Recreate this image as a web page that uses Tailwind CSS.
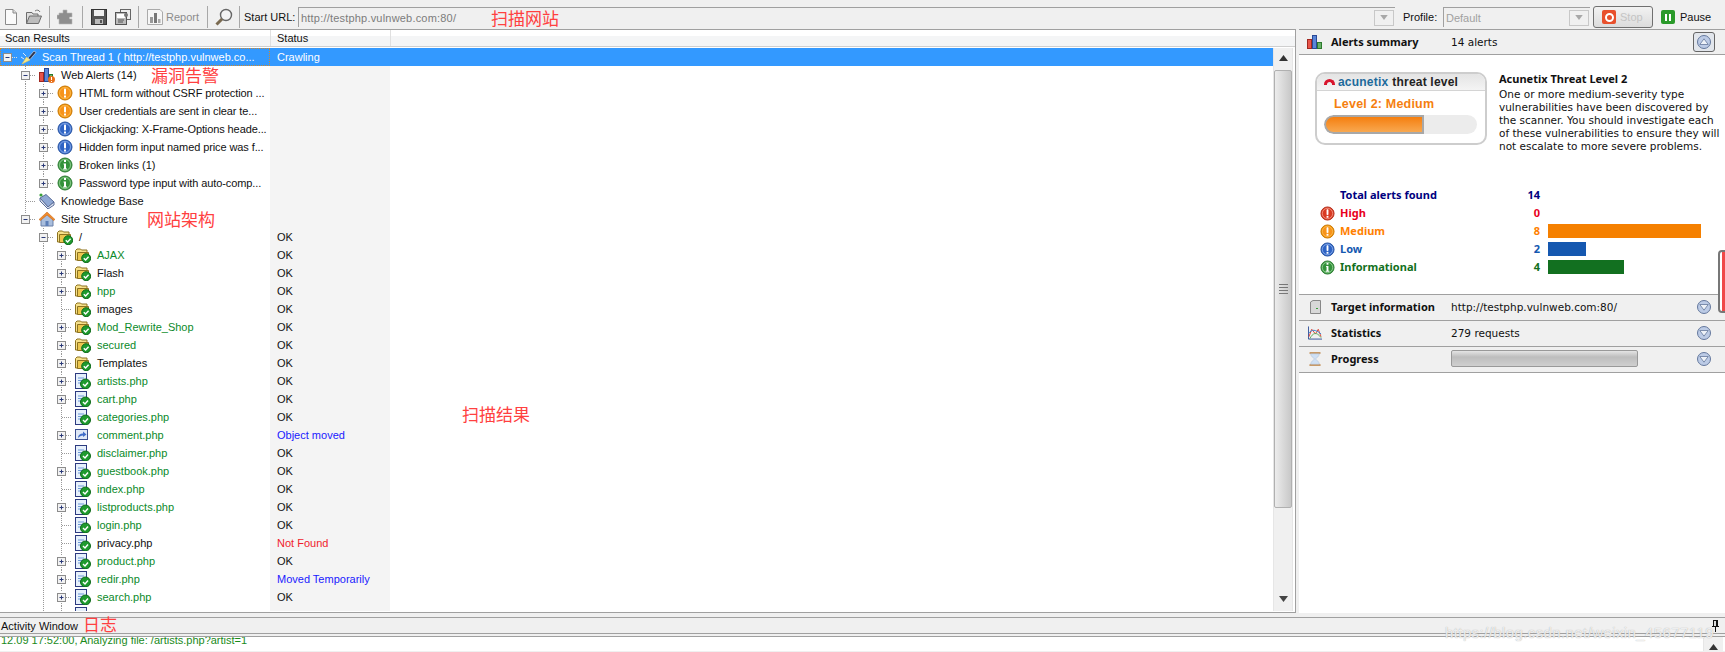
<!DOCTYPE html>
<html lang="en">
<head>
  <meta charset="UTF-8" />
  <title>Acunetix Web Vulnerability Scanner</title>
  <script src="https://cdn.jsdelivr.net/npm/@tailwindcss/browser@4"></script>
</head>
<body class="relative h-[652px] w-[1725px] overflow-hidden bg-[#f0f0f0] font-['Liberation_Sans',sans-serif] text-[11px] leading-[18px] text-[#111]">

  <!-- icon sprite -->
  <svg class="absolute size-0" aria-hidden="true">
    <!-- tree connectors -->
    <symbol id="g" viewBox="0 0 18 18"><path d="M7.5 0V18" stroke="#999" stroke-dasharray="1 1" fill="none"/></symbol>
    <symbol id="l" viewBox="0 0 18 18"><path d="M7.5 0V18M8 9.5H18" stroke="#999" stroke-dasharray="1 1" fill="none"/></symbol>
    <symbol id="p" viewBox="0 0 18 18"><path d="M7.5 0V4M7.5 13V18M12 9.5H18" stroke="#999" stroke-dasharray="1 1" fill="none"/><rect x="3.5" y="5.5" width="8" height="8" fill="#f2f2f2" stroke="#8c8c8c"/><path d="M5.5 9.5H9.5M7.5 7.5V11.5" stroke="#2b3a78"/></symbol>
    <symbol id="pe" viewBox="0 0 18 18"><path d="M7.5 0V4M12 9.5H18" stroke="#999" stroke-dasharray="1 1" fill="none"/><rect x="3.5" y="5.5" width="8" height="8" fill="#f2f2f2" stroke="#8c8c8c"/><path d="M5.5 9.5H9.5M7.5 7.5V11.5" stroke="#2b3a78"/></symbol>
    <symbol id="m" viewBox="0 0 18 18"><path d="M7.5 0V4M7.5 13V18M12 9.5H18" stroke="#999" stroke-dasharray="1 1" fill="none"/><rect x="3.5" y="5.5" width="8" height="8" fill="#f2f2f2" stroke="#8c8c8c"/><path d="M5.5 9.5H9.5" stroke="#2b3a78"/></symbol>
    <symbol id="me" viewBox="0 0 18 18"><path d="M7.5 0V4M12 9.5H18" stroke="#999" stroke-dasharray="1 1" fill="none"/><rect x="3.5" y="5.5" width="8" height="8" fill="#f2f2f2" stroke="#8c8c8c"/><path d="M5.5 9.5H9.5" stroke="#2b3a78"/></symbol>
    <symbol id="m0" viewBox="0 0 18 18"><path d="M12 9.5H18" stroke="#ddd" stroke-dasharray="1 1" fill="none"/><rect x="3.5" y="5.5" width="8" height="8" fill="#f2f2f2" stroke="#8c8c8c"/><path d="M5.5 9.5H9.5" stroke="#2b3a78"/></symbol>
    <!-- alert circles -->
    <symbol id="warn" viewBox="0 0 16 16"><circle cx="8" cy="8" r="7" fill="#f59a0c" stroke="#c87400"/><circle cx="8" cy="8" r="5.5" fill="#f7931a" stroke="#fcc060" stroke-width=".7"/><rect x="7" y="3.5" width="2" height="6" rx=".8" fill="#fff"/><rect x="7" y="10.5" width="2" height="2" fill="#fff"/></symbol>
    <symbol id="low" viewBox="0 0 16 16"><circle cx="8" cy="8" r="7" fill="#3f72cf" stroke="#23509f"/><circle cx="8" cy="8" r="5.5" fill="#2e63c4" stroke="#9dbcf0" stroke-width=".7"/><rect x="7" y="3.5" width="2" height="6" rx=".8" fill="#fff"/><rect x="7" y="10.5" width="2" height="2" fill="#fff"/></symbol>
    <symbol id="info" viewBox="0 0 16 16"><circle cx="8" cy="8" r="7" fill="#4aa24e" stroke="#2a7a30"/><circle cx="8" cy="8" r="5.5" fill="#33923a" stroke="#a8dca8" stroke-width=".7"/><rect x="7" y="3" width="2" height="2" fill="#fff"/><path d="M6.5 6.5H9V11.5H10V12.5H6V11.5H7V7.5H6.5Z" fill="#fff"/></symbol>
    <symbol id="high" viewBox="0 0 16 16"><circle cx="8" cy="8" r="7" fill="#e04a30" stroke="#b02a18"/><circle cx="8" cy="8" r="5.5" fill="#d93a22" stroke="#f8a898" stroke-width=".7"/><rect x="7" y="3.5" width="2" height="6" rx=".8" fill="#fff"/><rect x="7" y="10.5" width="2" height="2" fill="#fff"/></symbol>
    <!-- tree node icons -->
    <symbol id="folder" viewBox="0 0 16 16"><path d="M.5 13V3.5L2 2H5.5L6.5 3H12V13Z" fill="#f6e08a" stroke="#8c7220"/><path d="M2.5 5.5H13.5V13.5H2.5Z" fill="#ecc64e" stroke="#8c7220"/><circle cx="11.2" cy="11.2" r="4.5" fill="#1f9a2e" stroke="#0e6a1a"/><path d="M8.8 11.2L10.6 13L13.6 9.8" stroke="#fff" stroke-width="1.4" fill="none"/></symbol>
    <symbol id="page" viewBox="0 0 16 16"><rect x=".5" y=".5" width="11" height="15" fill="#e6f0fb" stroke="#2c3a80"/><path d="M3 5H9M3 7.5H8M3 10H6" stroke="#6c9ad8"/><circle cx="10.5" cy="11" r="5" fill="#1f9a2e" stroke="#0e6a1a"/><path d="M8 11L10 13L13 9.5" stroke="#fff" stroke-width="1.4" fill="none"/></symbol>
    <symbol id="redirect" viewBox="0 0 16 16"><rect x=".5" y="2.5" width="12" height="10" fill="#dfe8f6" stroke="#3b4f90"/><path d="M3 11C3 8 5 6.5 8 6.5V4.5L11.5 7.5L8 10V8.5C6 8.5 4.5 9.5 3 11Z" fill="#3f6cc8"/></symbol>
    <symbol id="scan" viewBox="0 0 16 16"><path d="M1 15L5.5 8L9 11Z" fill="#f8e88a" stroke="#e8c850" stroke-width=".6"/><path d="M7 9L13 2L15 3.5L9 10.5Z" fill="#2c3550" stroke="#fff" stroke-width=".5"/><path d="M0 8L3 10M2 4L5 7" stroke="#dce8f8"/></symbol>
    <symbol id="alerts" viewBox="0 0 16 16"><rect x=".5" y="5.5" width="4" height="9" fill="#e8544a" stroke="#a02820"/><rect x="5.5" y="1.5" width="4" height="13" fill="#5a86d8" stroke="#2a4a98"/><rect x="10.5" y="7.5" width="3" height="7" fill="#6ab06a" stroke="#2c7a2c"/><circle cx="12.5" cy="12.5" r="3.5" fill="#e8701a"/><rect x="12" y="10" width="1" height="3" fill="#fff"/><rect x="12" y="14" width="1" height="1" fill="#fff"/></symbol>
    <symbol id="book" viewBox="0 0 16 16"><path d="M1 5L7 1.5L15 9L9 14Z" fill="#8fa8d4" stroke="#5a6c98"/><path d="M1 5V8L9 16L15 12V9L9 14Z" fill="#dfe6f2" stroke="#5a6c98"/><circle cx="2" cy="2" r="1.6" fill="#3aa03a"/></symbol>
    <symbol id="house" viewBox="0 0 16 16"><path d="M2 8V15H14V8L8 3Z" fill="#a9bedd" stroke="#6a80a8"/><path d="M0 8.5L8 1L16 8.5L14.5 9.5L8 4L1.5 9.5Z" fill="#ef8a2c" stroke="#c05f10" stroke-width=".5"/><rect x="6.5" y="10" width="3" height="5" fill="#5d7fb8"/></symbol>
    <!-- toolbar -->
    <symbol id="t-new" viewBox="0 0 16 16"><path d="M2.5 .5H10L13.5 4V15.5H2.5Z" fill="#fafafa" stroke="#8a8a8a"/><path d="M10 .5V4H13.5" fill="#ddd" stroke="#8a8a8a"/></symbol>
    <symbol id="t-open" viewBox="0 0 16 16"><path d="M.5 14.5V3.5H6L7 5H12V7" fill="#ddd" stroke="#6c6c6c"/><path d="M.5 14.5L3.5 7H15.5L12.5 14.5Z" fill="#bdbdbd" stroke="#6c6c6c"/><path d="M9 2C11 .5 13 1 14 3" stroke="#777" fill="none"/></symbol>
    <symbol id="t-plug" viewBox="0 0 16 16"><path d="M6 1H10V4H15V8H12.5V10H15V15H2V10H0V6H2V4H6Z" fill="#8e8e8e" stroke="#b8b8b8" stroke-width=".6"/></symbol>
    <symbol id="t-save" viewBox="0 0 16 16"><rect x=".5" y=".5" width="15" height="15" fill="#555" stroke="#333"/><rect x="3" y="1" width="10" height="6" fill="#efefef"/><rect x="4" y="10" width="8" height="5" fill="#bbb"/><rect x="9" y="11" width="2" height="3" fill="#555"/></symbol>
    <symbol id="t-saveall" viewBox="0 0 16 16"><rect x="5.5" y=".5" width="10" height="10" fill="#eee" stroke="#666"/><rect x=".5" y="3.5" width="11" height="12" fill="#bbb" stroke="#555"/><rect x="2" y="5" width="8" height="4" fill="#fff"/><path d="M3 11H9M3 13H8" stroke="#555"/><circle cx="11" cy="6" r="2" fill="#777"/></symbol>
    <symbol id="t-report" viewBox="0 0 16 16"><path d="M.5 .5H13L15.5 3V15.5H.5Z" fill="#f6f6f6" stroke="#aaa"/><rect x="3" y="8" width="3" height="6" fill="#999"/><rect x="7" y="4" width="3" height="10" fill="#777"/><rect x="11" y="10" width="2.5" height="4" fill="#aaa"/></symbol>
    <symbol id="t-find" viewBox="0 0 18 18"><circle cx="11" cy="7" r="5.5" fill="#f3f3f3" stroke="#666" stroke-width="1.4"/><path d="M7 11L1.5 16.5" stroke="#7a6a50" stroke-width="3"/></symbol>
    <!-- right panel -->
    <symbol id="r-bars" viewBox="0 0 16 14"><rect x=".5" y="4.5" width="4" height="9" fill="#e8544a" stroke="#a02820"/><rect x="5.5" y=".5" width="4" height="13" fill="#5a86d8" stroke="#2a4a98"/><rect x="10.5" y="7.5" width="4" height="6" fill="#6ab06a" stroke="#2c7a2c"/></symbol>
    <symbol id="r-server" viewBox="0 0 14 14"><path d="M2.5 2L5 .5H12.5V13.5H2.5Z" fill="#d8d8d8" stroke="#888"/><rect x="8" y="8" width="2" height="1" fill="#3aa03a"/></symbol>
    <symbol id="r-stats" viewBox="0 0 15 14"><path d="M.5 0V13.5H15" stroke="#2a4a98" fill="none"/><path d="M1 11L4 3L8 8L11 3L14 11" stroke="#e04030" fill="none"/><path d="M1 7C4 3 8 3 14 8" stroke="#3a80d0" fill="none"/><path d="M2 13C5 7 9 5 14 12" stroke="#58a858" fill="none"/></symbol>
    <symbol id="r-glass" viewBox="0 0 15 16"><rect x="1" y="0" width="13" height="2.2" rx="1" fill="#c89a68"/><rect x="1" y="13.8" width="13" height="2.2" rx="1" fill="#c89a68"/><path d="M2.5 2H12.5C12.5 5 9 7 8 8C9 9 12.5 11 12.5 14H2.5C2.5 11 6 9 7 8C6 7 2.5 5 2.5 2Z" fill="#cfe0f4" stroke="#a8b8cc" stroke-width=".5"/></symbol>
    <symbol id="r-down" viewBox="0 0 14 14"><circle cx="7" cy="7" r="6.5" fill="#bccbe6" stroke="#64789c"/><path d="M2.8 4.5H11.2L7 10.2Z" fill="#eef2f8" stroke="#64789c" stroke-width=".8" stroke-linejoin="round"/></symbol>
    <symbol id="r-up" viewBox="0 0 14 14"><circle cx="7" cy="7" r="6.5" fill="#bccbe6" stroke="#64789c"/><path d="M2.8 9.5H11.2L7 3.8Z" fill="#eef2f8" stroke="#64789c" stroke-width=".8" stroke-linejoin="round"/></symbol>
    <symbol id="arrow-up" viewBox="0 0 9 6"><path d="M4.5 0L9 6H0Z" fill="#333"/></symbol>
    <symbol id="arrow-down" viewBox="0 0 9 6"><path d="M4.5 6L9 0H0Z" fill="#444"/></symbol>
    <symbol id="arrow-light" viewBox="0 0 9 6"><path d="M4.5 6L9 0H0Z" fill="#a8a8a8"/></symbol>
  </svg>

  <!-- toolbar -->
  <div class="flex h-[29px] items-center pl-[3px] pt-[5px]">
    <svg class="size-4 shrink-0"><use href="#t-new"/></svg>
    <svg class="ml-[7px] size-4 shrink-0"><use href="#t-open"/></svg>
    <i class="ml-[7px] h-[22px] w-px bg-[#a8a8a8]"></i>
    <svg class="ml-[7px] size-4 shrink-0"><use href="#t-plug"/></svg>
    <i class="ml-[9px] h-[22px] w-px bg-[#a8a8a8]"></i>
    <svg class="ml-[8px] size-4 shrink-0"><use href="#t-save"/></svg>
    <svg class="ml-[8px] size-4 shrink-0"><use href="#t-saveall"/></svg>
    <i class="ml-[7px] h-[22px] w-px bg-[#a8a8a8]"></i>
    <svg class="ml-[8px] size-4 shrink-0"><use href="#t-report"/></svg>
    <span class="ml-[3px] w-[34px] text-[#8c8c8c]">Report</span>
    <i class="ml-[7px] h-[22px] w-px bg-[#a8a8a8]"></i>
    <svg class="ml-[7px] size-[18px] shrink-0"><use href="#t-find"/></svg>
    <i class="ml-[6px] h-[22px] w-px bg-[#a8a8a8]"></i>
    <span class="ml-[4px] w-[50px] whitespace-nowrap">Start URL:</span>
    <div class="ml-[4px] flex h-[20px] w-[1097px] items-center border-t border-l border-t-[#a0a0a0] border-l-[#a0a0a0] pl-[2px] text-[#7c7c7c]">
      <span class="w-[190px] tracking-[0.2px]">http://testphp.vulnweb.com:80/</span>
      <span class="font-['Noto_Sans_CJK_SC',sans-serif] text-[17px] leading-[20px] text-[#ff4040]">扫描网站</span>
      <div class="ml-auto mr-[1px] flex h-[16px] w-[20px] items-center justify-center border border-[#c8c8c8] bg-[#f0f0f0]"><svg class="h-[5px] w-[8px]"><use href="#arrow-light"/></svg></div>
    </div>
    <span class="ml-[8px] w-[34px]">Profile:</span>
    <div class="ml-[6px] flex h-[20px] w-[147px] items-center border-t border-l border-t-[#a0a0a0] border-l-[#a0a0a0] pl-[2px] text-[#a0a0a0]">
      <span>Default</span>
      <div class="ml-auto mr-[1px] flex h-[16px] w-[20px] items-center justify-center border border-[#c8c8c8] bg-[#f0f0f0]"><svg class="h-[5px] w-[8px]"><use href="#arrow-light"/></svg></div>
    </div>
    <div class="ml-[3px] flex h-[22px] w-[60px] items-center rounded-[3px] border border-[#707070] bg-gradient-to-b from-[#f2f2f2] to-[#dcdcdc] pl-[8px] text-[#c4c4c4]">
      <span class="flex size-[14px] items-center justify-center rounded-[2px] bg-[#e8502c]"><span class="size-[9px] rounded-full border-2 border-white"></span></span>
      <span class="ml-[4px]">Stop</span>
    </div>
    <span class="ml-[8px] flex size-[14px] items-center justify-center gap-[2px] rounded-[2px] bg-[#2a9a2a]"><i class="h-[7px] w-[2px] bg-white"></i><i class="h-[7px] w-[2px] bg-white"></i></span>
    <span class="ml-[5px]">Pause</span>
  </div>

  <!-- main split -->
  <div class="flex h-[584px]">
    <!-- scan results pane -->
    <div class="relative flex h-full w-[1296px] flex-col border-y border-r border-[#a0a0a0] bg-white">
      <div class="mb-px flex h-[17px] border-b border-[#cfcfcf] bg-[linear-gradient(#fff_0,#fff_40%,#f4f5f6_40%)] leading-[16px]">
        <div class="w-[270px] pl-[5px]">Scan Results</div>
        <div class="w-[120px] border-l border-[#e0e0e0] pl-[6px]">Status</div>
        <div class="flex-1 border-l border-[#e0e0e0]"></div>
      </div>
      <div class="flex h-[563px] overflow-hidden">
        <div class="w-[1273px] shrink-0">
          <!-- root row -->
          <div class="flex h-[18px] bg-[#3399ff] text-white">
            <div class="flex w-[270px] shrink-0 items-center overflow-hidden border border-dotted border-[#d08a30] whitespace-nowrap"><svg class="size-[18px] shrink-0 -ml-px"><use href="#m0"/></svg><svg class="ml-[3px] mr-[5px] size-4 shrink-0"><use href="#scan"/></svg>Scan Thread 1 ( http://testphp.vulnweb.co...</div>
            <div class="w-[120px] pl-[7px]">Crawling</div>
          </div>
          <!-- alerts -->
          <div class="flex h-[18px]"><div class="flex w-[270px] shrink-0 items-center"><i class="w-[18px] shrink-0"></i><svg class="size-[18px] shrink-0"><use href="#m"/></svg><svg class="ml-[3px] mr-[6px] size-4 shrink-0"><use href="#alerts"/></svg><span class="w-[90px]">Web Alerts (14)</span><span class="font-['Noto_Sans_CJK_SC',sans-serif] text-[17px] leading-[18px] text-[#ff4040]">漏洞告警</span></div><div class="w-[120px] bg-[#f4f4f4] pl-[7px]"></div></div>
          <div class="flex h-[18px]"><div class="flex w-[270px] shrink-0 items-center tracking-[-0.1px] whitespace-nowrap"><i class="w-[18px] shrink-0"></i><svg class="size-[18px] shrink-0"><use href="#g"/></svg><svg class="size-[18px] shrink-0"><use href="#p"/></svg><svg class="ml-[3px] mr-[6px] size-4 shrink-0"><use href="#warn"/></svg>HTML form without CSRF protection ...</div><div class="w-[120px] bg-[#f4f4f4] pl-[7px]"></div></div>
          <div class="flex h-[18px]"><div class="flex w-[270px] shrink-0 items-center tracking-[-0.1px] whitespace-nowrap"><i class="w-[18px] shrink-0"></i><svg class="size-[18px] shrink-0"><use href="#g"/></svg><svg class="size-[18px] shrink-0"><use href="#p"/></svg><svg class="ml-[3px] mr-[6px] size-4 shrink-0"><use href="#warn"/></svg>User credentials are sent in clear te...</div><div class="w-[120px] bg-[#f4f4f4] pl-[7px]"></div></div>
          <div class="flex h-[18px]"><div class="flex w-[270px] shrink-0 items-center tracking-[-0.1px] whitespace-nowrap"><i class="w-[18px] shrink-0"></i><svg class="size-[18px] shrink-0"><use href="#g"/></svg><svg class="size-[18px] shrink-0"><use href="#p"/></svg><svg class="ml-[3px] mr-[6px] size-4 shrink-0"><use href="#low"/></svg>Clickjacking: X-Frame-Options heade...</div><div class="w-[120px] bg-[#f4f4f4] pl-[7px]"></div></div>
          <div class="flex h-[18px]"><div class="flex w-[270px] shrink-0 items-center tracking-[-0.1px] whitespace-nowrap"><i class="w-[18px] shrink-0"></i><svg class="size-[18px] shrink-0"><use href="#g"/></svg><svg class="size-[18px] shrink-0"><use href="#p"/></svg><svg class="ml-[3px] mr-[6px] size-4 shrink-0"><use href="#low"/></svg>Hidden form input named price was f...</div><div class="w-[120px] bg-[#f4f4f4] pl-[7px]"></div></div>
          <div class="flex h-[18px]"><div class="flex w-[270px] shrink-0 items-center whitespace-nowrap"><i class="w-[18px] shrink-0"></i><svg class="size-[18px] shrink-0"><use href="#g"/></svg><svg class="size-[18px] shrink-0"><use href="#p"/></svg><svg class="ml-[3px] mr-[6px] size-4 shrink-0"><use href="#info"/></svg>Broken links (1)</div><div class="w-[120px] bg-[#f4f4f4] pl-[7px]"></div></div>
          <div class="flex h-[18px]"><div class="flex w-[270px] shrink-0 items-center tracking-[-0.1px] whitespace-nowrap"><i class="w-[18px] shrink-0"></i><svg class="size-[18px] shrink-0"><use href="#g"/></svg><svg class="size-[18px] shrink-0"><use href="#pe"/></svg><svg class="ml-[3px] mr-[6px] size-4 shrink-0"><use href="#info"/></svg>Password type input with auto-comp...</div><div class="w-[120px] bg-[#f4f4f4] pl-[7px]"></div></div>
          <div class="flex h-[18px]"><div class="flex w-[270px] shrink-0 items-center"><i class="w-[18px] shrink-0"></i><svg class="size-[18px] shrink-0"><use href="#l"/></svg><svg class="ml-[3px] mr-[6px] size-4 shrink-0"><use href="#book"/></svg>Knowledge Base</div><div class="w-[120px] bg-[#f4f4f4] pl-[7px]"></div></div>
          <div class="flex h-[18px]"><div class="flex w-[270px] shrink-0 items-center"><i class="w-[18px] shrink-0"></i><svg class="size-[18px] shrink-0"><use href="#me"/></svg><svg class="ml-[3px] mr-[6px] size-4 shrink-0"><use href="#house"/></svg><span class="w-[86px]">Site Structure</span><span class="font-['Noto_Sans_CJK_SC',sans-serif] text-[17px] leading-[18px] text-[#ff4040]">网站架构</span></div><div class="w-[120px] bg-[#f4f4f4] pl-[7px]"></div></div>
          <!-- site tree -->
          <div class="flex h-[18px]"><div class="flex w-[270px] shrink-0 items-center"><i class="w-[36px] shrink-0"></i><svg class="size-[18px] shrink-0"><use href="#m"/></svg><svg class="ml-[3px] mr-[6px] size-4 shrink-0"><use href="#folder"/></svg>/</div><div class="w-[120px] bg-[#f4f4f4] pl-[7px]">OK</div></div>
          <div class="flex h-[18px]"><div class="flex w-[270px] shrink-0 items-center text-[#0b8a2a]"><i class="w-[36px] shrink-0"></i><svg class="size-[18px] shrink-0"><use href="#g"/></svg><svg class="size-[18px] shrink-0"><use href="#p"/></svg><svg class="ml-[3px] mr-[6px] size-4 shrink-0"><use href="#folder"/></svg>AJAX</div><div class="w-[120px] bg-[#f4f4f4] pl-[7px]">OK</div></div>
          <div class="flex h-[18px]"><div class="flex w-[270px] shrink-0 items-center"><i class="w-[36px] shrink-0"></i><svg class="size-[18px] shrink-0"><use href="#g"/></svg><svg class="size-[18px] shrink-0"><use href="#p"/></svg><svg class="ml-[3px] mr-[6px] size-4 shrink-0"><use href="#folder"/></svg>Flash</div><div class="w-[120px] bg-[#f4f4f4] pl-[7px]">OK</div></div>
          <div class="flex h-[18px]"><div class="flex w-[270px] shrink-0 items-center text-[#0b8a2a]"><i class="w-[36px] shrink-0"></i><svg class="size-[18px] shrink-0"><use href="#g"/></svg><svg class="size-[18px] shrink-0"><use href="#p"/></svg><svg class="ml-[3px] mr-[6px] size-4 shrink-0"><use href="#folder"/></svg>hpp</div><div class="w-[120px] bg-[#f4f4f4] pl-[7px]">OK</div></div>
          <div class="flex h-[18px]"><div class="flex w-[270px] shrink-0 items-center"><i class="w-[36px] shrink-0"></i><svg class="size-[18px] shrink-0"><use href="#g"/></svg><svg class="size-[18px] shrink-0"><use href="#l"/></svg><svg class="ml-[3px] mr-[6px] size-4 shrink-0"><use href="#folder"/></svg>images</div><div class="w-[120px] bg-[#f4f4f4] pl-[7px]">OK</div></div>
          <div class="flex h-[18px]"><div class="flex w-[270px] shrink-0 items-center text-[#0b8a2a]"><i class="w-[36px] shrink-0"></i><svg class="size-[18px] shrink-0"><use href="#g"/></svg><svg class="size-[18px] shrink-0"><use href="#p"/></svg><svg class="ml-[3px] mr-[6px] size-4 shrink-0"><use href="#folder"/></svg>Mod_Rewrite_Shop</div><div class="w-[120px] bg-[#f4f4f4] pl-[7px]">OK</div></div>
          <div class="flex h-[18px]"><div class="flex w-[270px] shrink-0 items-center text-[#0b8a2a]"><i class="w-[36px] shrink-0"></i><svg class="size-[18px] shrink-0"><use href="#g"/></svg><svg class="size-[18px] shrink-0"><use href="#p"/></svg><svg class="ml-[3px] mr-[6px] size-4 shrink-0"><use href="#folder"/></svg>secured</div><div class="w-[120px] bg-[#f4f4f4] pl-[7px]">OK</div></div>
          <div class="flex h-[18px]"><div class="flex w-[270px] shrink-0 items-center"><i class="w-[36px] shrink-0"></i><svg class="size-[18px] shrink-0"><use href="#g"/></svg><svg class="size-[18px] shrink-0"><use href="#p"/></svg><svg class="ml-[3px] mr-[6px] size-4 shrink-0"><use href="#folder"/></svg>Templates</div><div class="w-[120px] bg-[#f4f4f4] pl-[7px]">OK</div></div>
          <div class="flex h-[18px]"><div class="flex w-[270px] shrink-0 items-center text-[#0b8a2a]"><i class="w-[36px] shrink-0"></i><svg class="size-[18px] shrink-0"><use href="#g"/></svg><svg class="size-[18px] shrink-0"><use href="#p"/></svg><svg class="ml-[3px] mr-[6px] size-4 shrink-0"><use href="#page"/></svg>artists.php</div><div class="w-[120px] bg-[#f4f4f4] pl-[7px]">OK</div></div>
          <div class="flex h-[18px]"><div class="flex w-[270px] shrink-0 items-center text-[#0b8a2a]"><i class="w-[36px] shrink-0"></i><svg class="size-[18px] shrink-0"><use href="#g"/></svg><svg class="size-[18px] shrink-0"><use href="#p"/></svg><svg class="ml-[3px] mr-[6px] size-4 shrink-0"><use href="#page"/></svg>cart.php</div><div class="w-[120px] bg-[#f4f4f4] pl-[7px]">OK</div></div>
          <div class="flex h-[18px]"><div class="flex w-[270px] shrink-0 items-center text-[#0b8a2a]"><i class="w-[36px] shrink-0"></i><svg class="size-[18px] shrink-0"><use href="#g"/></svg><svg class="size-[18px] shrink-0"><use href="#l"/></svg><svg class="ml-[3px] mr-[6px] size-4 shrink-0"><use href="#page"/></svg>categories.php</div><div class="w-[120px] bg-[#f4f4f4] pl-[7px]">OK</div></div>
          <div class="flex h-[18px]"><div class="flex w-[270px] shrink-0 items-center text-[#0b8a2a]"><i class="w-[36px] shrink-0"></i><svg class="size-[18px] shrink-0"><use href="#g"/></svg><svg class="size-[18px] shrink-0"><use href="#p"/></svg><svg class="ml-[3px] mr-[6px] size-4 shrink-0"><use href="#redirect"/></svg>comment.php</div><div class="w-[120px] bg-[#f4f4f4] pl-[7px] text-[#1a1aff]">Object moved</div></div>
          <div class="flex h-[18px]"><div class="flex w-[270px] shrink-0 items-center text-[#0b8a2a]"><i class="w-[36px] shrink-0"></i><svg class="size-[18px] shrink-0"><use href="#g"/></svg><svg class="size-[18px] shrink-0"><use href="#l"/></svg><svg class="ml-[3px] mr-[6px] size-4 shrink-0"><use href="#page"/></svg>disclaimer.php</div><div class="w-[120px] bg-[#f4f4f4] pl-[7px]">OK</div></div>
          <div class="flex h-[18px]"><div class="flex w-[270px] shrink-0 items-center text-[#0b8a2a]"><i class="w-[36px] shrink-0"></i><svg class="size-[18px] shrink-0"><use href="#g"/></svg><svg class="size-[18px] shrink-0"><use href="#p"/></svg><svg class="ml-[3px] mr-[6px] size-4 shrink-0"><use href="#page"/></svg>guestbook.php</div><div class="w-[120px] bg-[#f4f4f4] pl-[7px]">OK</div></div>
          <div class="flex h-[18px]"><div class="flex w-[270px] shrink-0 items-center text-[#0b8a2a]"><i class="w-[36px] shrink-0"></i><svg class="size-[18px] shrink-0"><use href="#g"/></svg><svg class="size-[18px] shrink-0"><use href="#l"/></svg><svg class="ml-[3px] mr-[6px] size-4 shrink-0"><use href="#page"/></svg>index.php</div><div class="w-[120px] bg-[#f4f4f4] pl-[7px]">OK</div></div>
          <div class="flex h-[18px]"><div class="flex w-[270px] shrink-0 items-center text-[#0b8a2a]"><i class="w-[36px] shrink-0"></i><svg class="size-[18px] shrink-0"><use href="#g"/></svg><svg class="size-[18px] shrink-0"><use href="#p"/></svg><svg class="ml-[3px] mr-[6px] size-4 shrink-0"><use href="#page"/></svg>listproducts.php</div><div class="w-[120px] bg-[#f4f4f4] pl-[7px]">OK</div></div>
          <div class="flex h-[18px]"><div class="flex w-[270px] shrink-0 items-center text-[#0b8a2a]"><i class="w-[36px] shrink-0"></i><svg class="size-[18px] shrink-0"><use href="#g"/></svg><svg class="size-[18px] shrink-0"><use href="#l"/></svg><svg class="ml-[3px] mr-[6px] size-4 shrink-0"><use href="#page"/></svg>login.php</div><div class="w-[120px] bg-[#f4f4f4] pl-[7px]">OK</div></div>
          <div class="flex h-[18px]"><div class="flex w-[270px] shrink-0 items-center"><i class="w-[36px] shrink-0"></i><svg class="size-[18px] shrink-0"><use href="#g"/></svg><svg class="size-[18px] shrink-0"><use href="#l"/></svg><svg class="ml-[3px] mr-[6px] size-4 shrink-0"><use href="#page"/></svg>privacy.php</div><div class="w-[120px] bg-[#f4f4f4] pl-[7px] text-[#f01c2c]">Not Found</div></div>
          <div class="flex h-[18px]"><div class="flex w-[270px] shrink-0 items-center text-[#0b8a2a]"><i class="w-[36px] shrink-0"></i><svg class="size-[18px] shrink-0"><use href="#g"/></svg><svg class="size-[18px] shrink-0"><use href="#p"/></svg><svg class="ml-[3px] mr-[6px] size-4 shrink-0"><use href="#page"/></svg>product.php</div><div class="w-[120px] bg-[#f4f4f4] pl-[7px]">OK</div></div>
          <div class="flex h-[18px]"><div class="flex w-[270px] shrink-0 items-center text-[#0b8a2a]"><i class="w-[36px] shrink-0"></i><svg class="size-[18px] shrink-0"><use href="#g"/></svg><svg class="size-[18px] shrink-0"><use href="#p"/></svg><svg class="ml-[3px] mr-[6px] size-4 shrink-0"><use href="#page"/></svg>redir.php</div><div class="w-[120px] bg-[#f4f4f4] pl-[7px] text-[#1a1aff]">Moved Temporarily</div></div>
          <div class="flex h-[18px]"><div class="flex w-[270px] shrink-0 items-center text-[#0b8a2a]"><i class="w-[36px] shrink-0"></i><svg class="size-[18px] shrink-0"><use href="#g"/></svg><svg class="size-[18px] shrink-0"><use href="#p"/></svg><svg class="ml-[3px] mr-[6px] size-4 shrink-0"><use href="#page"/></svg>search.php</div><div class="w-[120px] bg-[#f4f4f4] pl-[7px]">OK</div></div>
          <div class="flex h-[18px]"><div class="flex w-[270px] shrink-0 items-center text-[#0b8a2a]"><i class="w-[36px] shrink-0"></i><svg class="size-[18px] shrink-0"><use href="#g"/></svg><svg class="size-[18px] shrink-0"><use href="#l"/></svg><svg class="ml-[3px] mr-[6px] size-4 shrink-0"><use href="#page"/></svg>showimage.php</div><div class="w-[120px] bg-[#f4f4f4] pl-[7px]"></div></div>
        </div>
        <!-- scrollbar -->
        <div class="flex w-[20px] shrink-0 flex-col items-center border-x border-[#e6e6e6] bg-[#f0f0f0]">
          <svg class="mt-[7px] h-[6px] w-[9px] shrink-0"><use href="#arrow-up"/></svg>
          <div class="mt-[9px] flex h-[438px] w-full shrink-0 flex-col items-center justify-center gap-[2px] rounded-[2px] border border-[#b0b0b0] bg-gradient-to-r from-[#ececec] to-[#c8c8c8]">
            <i class="h-px w-[9px] bg-[#777]"></i><i class="h-px w-[9px] bg-[#777]"></i><i class="h-px w-[9px] bg-[#777]"></i><i class="h-px w-[9px] bg-[#777]"></i>
          </div>
          <svg class="mt-auto mb-[9px] h-[6px] w-[9px] shrink-0"><use href="#arrow-down"/></svg>
        </div>
      </div>
      <span class="absolute left-[462px] top-[372px] font-['Noto_Sans_CJK_SC',sans-serif] text-[17px] leading-[24px] text-[#ff4040]">扫描结果</span>
    </div>

    <!-- summary pane -->
    <div class="ml-[3px] flex h-full flex-1 flex-col border-t border-[#a0a0a0] bg-white font-['DejaVu_Sans',sans-serif] text-[10.5px]">
      <div class="flex h-[25px] shrink-0 items-center border-b border-[#a0a0a0] bg-[#f0f0f0] pl-[8px]">
        <svg class="h-[14px] w-4 shrink-0"><use href="#r-bars"/></svg>
        <span class="ml-[8px] w-[120px] font-['Noto_Sans',sans-serif] text-[11px] font-bold">Alerts summary</span>
        <span>14 alerts</span>
        <div class="ml-auto mr-[10px] flex h-[20px] w-[22px] items-center justify-center rounded-[3px] border border-[#666] bg-[#e2e6ec]"><svg class="size-[14px]"><use href="#r-up"/></svg></div>
      </div>

      <div class="flex pl-[16px] pt-[17px]">
        <!-- threat level widget -->
        <div class="h-[73px] w-[172px] shrink-0 overflow-hidden rounded-[10px] border-2 border-[#cdcdcd] bg-white">
          <div class="flex h-[17px] items-center border-b border-[#d4d4d4] bg-gradient-to-b from-[#e4e4e4] to-[#f4f4f4] pl-[7px] font-['Liberation_Sans',sans-serif] text-[12px] font-bold tracking-[0.2px]">
            <span class="h-[6px] w-[11px] rounded-t-full border-[3px] border-b-0 border-[#d8142c]"></span>
            <span class="ml-[3px] text-[#1d6a9c]">acunetix</span>
            <span class="ml-[4px] text-[#222]">threat level</span>
          </div>
          <div class="pl-[17px] pt-[5px] font-['Liberation_Sans',sans-serif] text-[12.5px] font-bold leading-[16px] tracking-[0.2px] text-[#f57f10]">Level 2: Medium</div>
          <div class="ml-[7px] mt-[3px] flex h-[19px] w-[153px] overflow-hidden rounded-full bg-[#ececec]">
            <div class="h-full w-[100px] rounded-l-full border-2 border-[#a8a8a8] bg-[linear-gradient(#f57f10,#f8a850)]"></div>
          </div>
        </div>
        <div class="ml-[12px] w-[222px] leading-[13px]">
          <div class="font-['Noto_Sans',sans-serif] text-[11px] font-bold leading-[14px]">Acunetix Threat Level 2</div>
          <p class="mt-[2px]">One or more medium-severity type<br>vulnerabilities have been discovered by<br>the scanner. You should investigate each<br>of these vulnerabilities to ensure they will<br>not escalate to more severe problems.</p>
        </div>
      </div>

      <!-- alert counts -->
      <div class="mt-[33px] flex flex-col font-['Noto_Sans',sans-serif] text-[11px] font-bold">
        <div class="flex h-[18px] items-center text-[#000080]"><span class="ml-[41px] w-[180px]">Total alerts found</span><span class="w-[20px] text-right">14</span></div>
        <div class="flex h-[18px] items-center text-[#e8001c]"><svg class="ml-[21px] size-[15px] shrink-0"><use href="#high"/></svg><span class="ml-[5px] w-[190px]">High</span><span class="w-[10px] text-right">0</span></div>
        <div class="flex h-[18px] items-center text-[#ff8000]"><svg class="ml-[21px] size-[15px] shrink-0"><use href="#warn"/></svg><span class="ml-[5px] w-[190px]">Medium</span><span class="w-[10px] text-right">8</span><i class="ml-[8px] h-[14px] w-[153px] bg-[#f58000]"></i></div>
        <div class="flex h-[18px] items-center text-[#1558b0]"><svg class="ml-[21px] size-[15px] shrink-0"><use href="#low"/></svg><span class="ml-[5px] w-[190px]">Low</span><span class="w-[10px] text-right">2</span><i class="ml-[8px] h-[14px] w-[38px] bg-[#1558b0]"></i></div>
        <div class="flex h-[18px] items-center text-[#127020]"><svg class="ml-[21px] size-[15px] shrink-0"><use href="#info"/></svg><span class="ml-[5px] w-[190px]">Informational</span><span class="w-[10px] text-right">4</span><i class="ml-[8px] h-[14px] w-[76px] bg-[#127020]"></i></div>
      </div>

      <!-- collapsed sections -->
      <div class="mt-[18px] border-t border-[#a0a0a0]">
        <div class="flex h-[26px] items-center border-b border-[#a0a0a0] bg-[#f0f0f0] pb-[2px] pl-[9px]"><svg class="size-[14px] shrink-0"><use href="#r-server"/></svg><span class="ml-[9px] w-[120px] font-['Noto_Sans',sans-serif] text-[11px] font-bold">Target information</span><span>http://testphp.vulnweb.com:80/</span><svg class="ml-auto mr-[14px] size-[14px] shrink-0"><use href="#r-down"/></svg></div>
        <div class="flex h-[26px] items-center border-b border-[#a0a0a0] bg-[#f0f0f0] pb-[2px] pl-[9px]"><svg class="size-[14px] shrink-0"><use href="#r-stats"/></svg><span class="ml-[9px] w-[120px] font-['Noto_Sans',sans-serif] text-[11px] font-bold">Statistics</span><span>279 requests</span><svg class="ml-auto mr-[14px] size-[14px] shrink-0"><use href="#r-down"/></svg></div>
        <div class="flex h-[26px] items-center border-b border-[#a0a0a0] bg-[#f0f0f0] pb-[2px] pl-[9px]"><svg class="size-[14px] shrink-0"><use href="#r-glass"/></svg><span class="ml-[9px] w-[120px] font-['Noto_Sans',sans-serif] text-[11px] font-bold">Progress</span><div class="h-[17px] w-[187px] rounded-[2px] border border-[#999] bg-[linear-gradient(#e4e4e4,#bdbdbd_40%,#cfcfcf)]"></div><svg class="ml-auto mr-[14px] size-[14px] shrink-0"><use href="#r-down"/></svg></div>
      </div>
    </div>
  </div>

  <!-- activity window -->
  <div class="mt-[4px] flex h-[16px] items-center justify-between border-t border-[#a0a0a0] pl-px">
    <div class="flex items-center"><span class="w-[82px]">Activity Window</span><span class="mb-[4px] font-['Noto_Sans_CJK_SC',sans-serif] text-[17px] leading-[16px] text-[#ff4040]">日志</span></div>
    <svg class="mr-[5px] h-[13px] w-[9px]" viewBox="0 0 9 13"><path d="M2 1H7V7H8V8H5V13H4V8H1V7H2Z" fill="#111"/><rect x="3" y="2" width="2" height="5" fill="#ddd"/></svg>
  </div>
  <div class="h-[4px] border-y border-[#a0a0a0]"></div>
  <div class="relative h-[14px] overflow-hidden bg-white pl-px leading-[14px] text-[#1a8a1a]">
    <div class="-mt-[4px]">12.09 17:52:00, Analyzing file: /artists.php?artist=1</div>
    <div class="absolute right-[2px] top-0 flex h-full w-[20px] items-center justify-center border-l border-[#e6e6e6] bg-[#f0f0f0]"><svg class="mt-[6px] h-[6px] w-[9px]"><use href="#arrow-up"/></svg></div>
  </div>

  <!-- overlays -->
  <div class="absolute left-[1718px] top-[250px] h-[63px] w-[10px] rounded-l-[4px] border-2 border-[#777] bg-white pl-[2px]"><div class="h-full w-full bg-[#f04848]"></div></div>
  <span class="absolute left-[1445px] top-[622px] font-['Liberation_Sans',sans-serif] text-[15px] leading-[22px] tracking-[0.4px] whitespace-nowrap text-white/80 [text-shadow:0_0_1px_#999]">https://blog.csdn.net/weixin_45677119</span>
</body>
</html>
